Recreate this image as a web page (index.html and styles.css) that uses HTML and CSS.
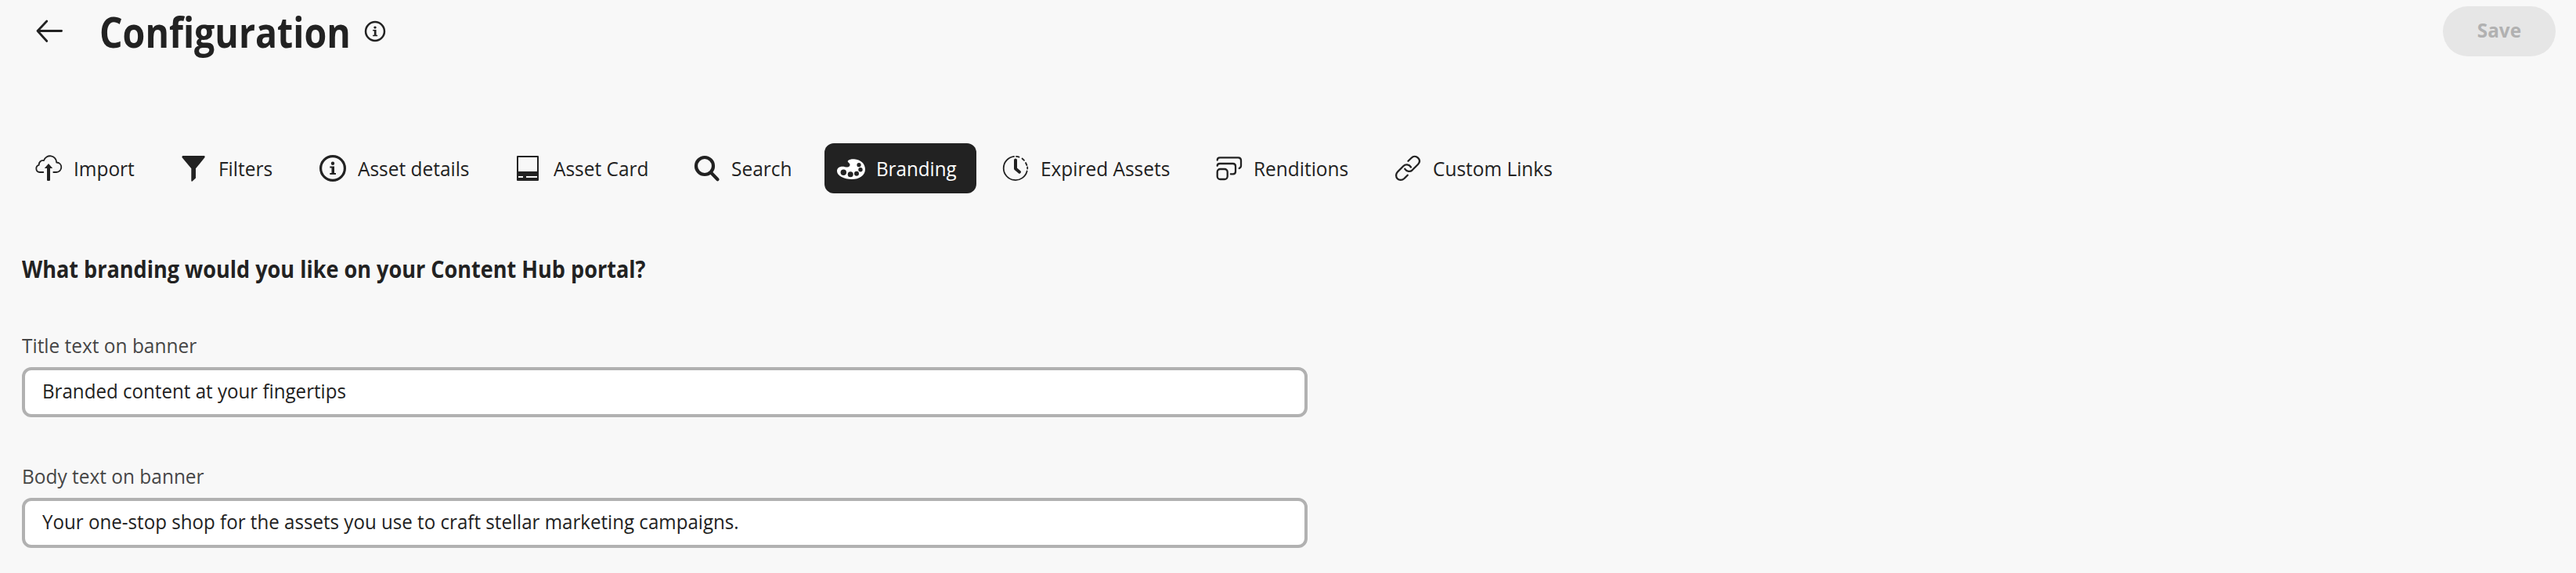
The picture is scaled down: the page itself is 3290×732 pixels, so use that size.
FILE: index.html
```html
<!DOCTYPE html>
<html lang="en">
<head>
<meta charset="utf-8">
<title>Configuration</title>
<link rel="stylesheet" href="styles.css">
</head>
<body>
<header class="header">
  <svg class="back" viewBox="0 0 36 36"><path d="M34.600 17.500H4M15.800 5 4 17.500 15.800 30.500"/></svg>
  <h1 class="title"><span>Configuration</span></h1>
  <svg class="hint" viewBox="0 0 36 36"><circle cx="18" cy="18" r="15.4"/><circle class="solid" cx="18" cy="11.7" r="2.2"/><path class="solid" d="M14.3 15.5H20V24h2v2h-7.700v-2h2.200v-6.500h-2.200z"/></svg>
  <button class="save"><span>Save</span></button>
</header>
<nav class="tabs">
  <a class="tab import"><svg class="icon line" viewBox="0 0 36 36"><path d="M11.3 23H6.7a4.7 4.7 0 0 1-1-9.2C5.6 10 8.300 7.400 12 8A8.300 8.300 0 0 1 28.200 10.500C31.800 10.600 34.300 13.200 34.300 16.600A6.400 6.400 0 0 1 28 23H24.300"/><path class="solid" d="M18 12l5.200 6H20v15q0 1-1 1h-2q-1 0-1-1V18h-3.200z"/></svg><span>Import</span></a>
  <a class="tab filters"><svg class="icon" viewBox="0 0 36 36"><path class="solid" d="M4.300 2H32q1.200 1 .2 2.600L21 18.300V30.500l-4.300 4.100q-1.400.6-1.400-.8V18.300L3.800 4.600Q2.800 3 4.300 2z"/></svg><span>Filters</span></a>
  <a class="tab details"><svg class="icon ring" viewBox="0 0 36 36"><circle cx="18" cy="18" r="15.400"/><circle class="solid" cx="18" cy="11.700" r="2.200"/><path class="solid" d="M14.300 15.500H20V24h2v2h-7.700v-2h2.200v-6.500h-2.200z"/></svg><span>Asset details</span></a>
  <a class="tab card"><svg class="icon" viewBox="0 0 36 36"><path class="solid" fill-rule="evenodd" d="M4 2H30q1 0 1 1V33q0 1-1 1H4q-1 0-1-1V3q0-1 1-1zM5 4V22H29V4zM5 28v2h6v-2zM15 28v2h14v-2z"/></svg><span>Asset Card</span></a>
  <a class="tab search"><svg class="icon bold" viewBox="0 0 36 36"><circle cx="16" cy="15" r="11"/><path d="M24 23.500 32.500 32.200"/></svg><span>Search</span></a>
  <a class="tab branding active"><svg class="icon" viewBox="0 0 36 36"><path class="solid" d="M14 8.200C16 6.500 19 6 22 6.200 30 6.700 36 12 36 19.200 36 27 28.500 32 19 32 9 32 0 27.500 0 21.500 0 17.800 3 15.700 7 15.700 10 15.700 12 17 14.500 16.200 17.500 15.200 17 12 14.500 10.500Q13 9.300 14 8.200z"/><g class="holes"><circle cx="8.300" cy="23.300" r="3.700"/><circle cx="17.200" cy="25.700" r="3.500"/><circle cx="25" cy="24.800" r="3"/><circle cx="30" cy="19.800" r="2.700"/><circle cx="28" cy="13.700" r="2.600"/></g></svg><span>Branding</span></a>
  <a class="tab expired"><svg class="icon line" viewBox="0 0 36 36"><path d="M16 2.800A15.200 15.200 0 1 0 32.700 21.500"/><path d="M19 2.800Q21 3 22.500 3.600M26.500 5.500 29 7.800M31 11 32.400 14M33.200 16.500V18.500"/><path class="hands" d="M18 7.500V18.500L23 22.800"/></svg><span>Expired Assets</span></a>
  <a class="tab renditions"><svg class="icon mid" viewBox="0 0 36 36"><path d="M3.700 7.500Q3.800 4.300 7 4.300H30.500Q34 4.300 34 8V14.500Q34 17 31.700 18M3.700 14.800Q3.800 12 7 12H23.500Q27 12 27 15.500V22Q27 25.300 24 25.300H20.800"/><rect x="3.700" y="19" width="13" height="13" rx="3.700"/></svg><span>Renditions</span></a>
  <a class="tab links"><svg class="icon mid" viewBox="0 0 36 36"><path d="M18.500 8.700 22.600 4.700C25 2.300 28.500 2.300 31 4.700S33.500 10.300 31 13L23.700 20.300C21 22.800 16.800 22.400 14.300 18.800"/><path d="M22 16.500C19.500 12.800 15 12.500 12.500 15L5 22.500C2.500 25 2.500 28.800 4.700 31.200S10.800 33.500 13.500 31L17.800 26.700"/></svg><span>Custom Links</span></a>
</nav>
<main class="form">
  <h2 class="question"><span>What branding would you like on your Content Hub portal?</span></h2>
  <div class="field"><label class="label"><span>Title text on banner</span></label><div class="input"><span>Branded content at your fingertips</span></div></div>
  <div class="field"><label class="label"><span>Body text on banner</span></label><div class="input"><span>Your one-stop shop for the assets you use to craft stellar marketing campaigns.</span></div></div>
</main>
</body>
</html>
```

FILE: styles.css
```css
* { box-sizing: border-box; }
body {
  margin: 0;
  height: 732px;
  overflow: hidden;
  background: #f8f8f8;
  color: #222;
  font: 26px/36px "Open Sans", "Noto Sans", sans-serif;
}
svg { flex: none; fill: none; stroke: currentColor; stroke-linecap: round; stroke-linejoin: round; }
/* Slightly condensed type throughout */
span { display: inline-block; white-space: nowrap; transform: scaleX(.94); transform-origin: left; }
.solid { fill: currentColor; stroke: none; }
.header { display: flex; height: 183px; padding: 8px 26px 0 44px; align-items: flex-start; }
.back { width: 36px; height: 36px; margin-top: 14px; stroke-width: 2.8; }
.title { width: 326px; margin: -3px 0 0 47px; font-size: 53px; line-height: 72px; font-weight: 700; }
.title span { transform: scaleX(.877); }
.hint { width: 28px; height: 28px; margin: 18px 0 0 12px; stroke-width: 3.2; }
.save { width: 144px; height: 64px; margin-left: auto; border: 0; padding: 0 0 4px; border-radius: 32px; background: #e6e6e6; color: #b1b1b1; font: 700 25px/60px "Open Sans", sans-serif; }
.save span { transform: scaleX(.97); transform-origin: center; }
.tabs { display: flex; gap: 16px; padding-left: 28px; height: 64px; }
.tab { display: flex; align-items: center; gap: 14px; padding-left: 16px; border-radius: 12px; }
.icon { width: 36px; height: 36px; }
.line { stroke-width: 1.8; }
.ring { stroke-width: 3.2; }
.bold { stroke-width: 4.2; }
.mid { stroke-width: 2.3; }
.hands { stroke-width: 4; }
.active { background: #222; color: #fff; }
.active span { transform: scaleX(.93); }
.holes { fill: #222; stroke: none; }
.import { width: 169px; }
.filters { width: 162px; }
.details { width: 234px; }
.card { width: 211px; }
.search { width: 169px; }
.branding { width: 194px; }
.expired { width: 256px; }
.renditions { width: 213px; }
.form { padding: 76px 0 0 28px; }
.question { height: 42px; margin: 0 0 58px; font-size: 30px; line-height: 42px; font-weight: 700; }
.question span { transform: scaleX(.902); }
.field { width: 1642px; height: 110px; margin-bottom: 57px; }
.field:last-child { margin-bottom: 0; }
.label { display: block; height: 46px; color: #464646; }
.input { display: flex; align-items: center; height: 64px; border: 4px solid #b1b1b1; border-radius: 12px; background: #fff; padding: 0 0 4px 22px; }
.input span { transform: scaleX(.928); }
```
